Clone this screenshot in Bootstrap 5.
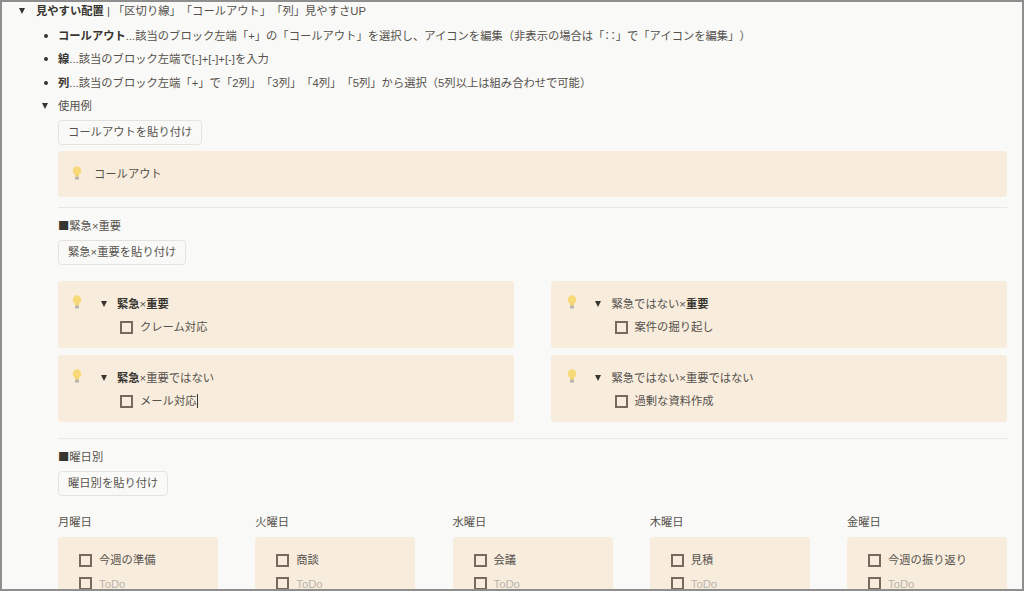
<!DOCTYPE html>
<html lang="ja">
<head>
  <meta charset="UTF-8">
  <title>見やすい配置</title>
  <link href="https://cdn.jsdelivr.net/npm/bootstrap@5.3.2/dist/css/bootstrap.min.css" rel="stylesheet">
  <style>
    html, body { height: 100%; overflow: hidden; }
    body {
      background: #f9f9f7;
      color: #55514c;
      font-family: "Liberation Sans", "Noto Sans CJK JP", sans-serif;
      font-size: 11.3px;
      line-height: 16px;
      text-spacing-trim: space-all;
    }
    b { color: #37352f; font-weight: 700; }
    .page-frame {
      height: 591px;
      overflow: hidden;
      border: 2px solid #8e8e8e;
      padding: 0 15px 0 16px;
    }
    .line-row { height: 23.5px; display: flex; align-items: center; }
    .first-row { height: 21.75px; padding-bottom: 3.5px; }
    .tri { width: 0; height: 0; flex: none; border-left: 3.5px solid transparent; border-right: 3.5px solid transparent; border-top: 6.5px solid #37352f; }
    .top-tri { margin: 0 11px 0 1px; }
    .sub-indent { padding-left: 40px; }
    .dot { width: 4px; height: 4px; border-radius: 50%; background: #37352f; flex: none; margin: 0 10px 0 26px; }
    .sub-tri { margin: 0 10px 0 24px; }
    .paste-btn {
      display: inline-block;
      padding: 0 9px;
      height: 25px;
      line-height: 23px;
      color: #57534e;
      background: #f9f9f7;
      border: 1px solid #e4e3df;
      border-radius: 4px;
    }
    .btn-row { margin-top: 8px; }
    .btn-row-top { margin-top: 2.5px; }
    .call-box { background: #f8ecdd; border-radius: 3px; }
    .call-wide { height: 46px; margin-top: 6px; padding: 0 14px; display: flex; align-items: center; }
    .bulb { width: 10px; height: 14px; flex: none; }
    .call-wide .bulb { margin-right: 12px; margin-top: -3px; }
    .rule-line { height: 1px; background: #e9e8e4; }
    .rule-one { margin: 10px 0 8px; }
    .rule-two { margin-top: 16px; margin-bottom: 8px; }
    .sect-title { height: 16px; padding-top: 1px; }
    .sect-mark { font-family: "Noto Sans CJK JP", sans-serif; color: #37352f; }
    .quad-grid { display: grid; grid-template-columns: 456px 456px; column-gap: 37px; row-gap: 7px; margin-top: 16px; }
    .quad-box { height: 67px; padding: 14px 14px 0; display: flex; }
    .quad-box:nth-child(even) { padding-left: 15.5px; }
    .quad-box .bulb { margin-right: 15px; }
    .quad-body { flex: 1; }
    .quad-head { display: flex; align-items: center; height: 16px; margin-top: 1px; }
    .quad-head .tri { margin-right: 10.5px; margin-left: 3.5px; }
    .check-row { display: flex; align-items: center; height: 16px; }
    .check-box { width: 13px; height: 13px; flex: none; border: 2px solid #766a5e; margin-right: 7px; }
    .quad-box .check-row { margin: 7px 0 0 23px; }
    .caret { display: inline-block; width: 1px; height: 14px; background: #37352f; vertical-align: -3px; }
    .day-grid { display: grid; grid-template-columns: repeat(5, 160px); column-gap: 37.25px; margin-top: 18px; }
    .day-head { height: 16px; margin-bottom: 7px; }
    .day-box { height: 70px; padding: 15px 0 0 21px; }
    .day-box .check-row { margin-bottom: 7.5px; }
    .hint-text { color: #b9b4ab; }
  </style>
</head>
<body>
  <svg width="0" height="0" class="d-block">
    <symbol id="bulb" viewBox="0 0 10 15">
      <circle cx="5" cy="5" r="4.6" fill="#f8d978"/>
      <rect x="3" y="9" width="4" height="2.5" fill="#f3cf6b"/>
      <rect x="3" y="11.5" width="4" height="3" rx=".6" fill="#b4b2ac"/>
    </symbol>
  </svg>
  <div class="page-frame">
    <div class="line-row first-row"><span class="tri top-tri"></span><span><b>見やすい配置</b> | 「区切り線」「コールアウト」「列」見やすさUP</span></div>
    <div class="line-row"><span class="dot"></span><span><b>コールアウト</b>...該当のブロック左端「+」の「コールアウト」を選択し、アイコンを編集（非表示の場合は「∷」で「アイコンを編集」）</span></div>
    <div class="line-row"><span class="dot"></span><span><b>線</b>...該当のブロック左端で[-]+[-]+[-]を入力</span></div>
    <div class="line-row"><span class="dot"></span><span><b>列</b>...該当のブロック左端「+」で「2列」「3列」「4列」「5列」から選択（5列以上は組み合わせで可能）</span></div>
    <div class="line-row"><span class="tri sub-tri"></span><span>使用例</span></div>

    <div class="sub-indent">
      <div class="btn-row-top"><span class="paste-btn">コールアウトを貼り付け</span></div>
      <div class="call-box call-wide">
        <svg class="bulb"><use href="#bulb"/></svg>
        <span>コールアウト</span>
      </div>
      <div class="rule-line rule-one"></div>

      <div class="sect-title"><span class="sect-mark">■</span>緊急×重要</div>
      <div class="btn-row"><span class="paste-btn">緊急×重要を貼り付け</span></div>

      <div class="quad-grid">
        <div class="call-box quad-box">
          <svg class="bulb"><use href="#bulb"/></svg>
          <div class="quad-body">
            <div class="quad-head"><span class="tri"></span><span><b>緊急</b>×<b>重要</b></span></div>
            <div class="check-row"><span class="check-box"></span><span>クレーム対応</span></div>
          </div>
        </div>
        <div class="call-box quad-box">
          <svg class="bulb"><use href="#bulb"/></svg>
          <div class="quad-body">
            <div class="quad-head"><span class="tri"></span><span>緊急ではない×<b>重要</b></span></div>
            <div class="check-row"><span class="check-box"></span><span>案件の掘り起し</span></div>
          </div>
        </div>
        <div class="call-box quad-box">
          <svg class="bulb"><use href="#bulb"/></svg>
          <div class="quad-body">
            <div class="quad-head"><span class="tri"></span><span><b>緊急</b>×重要ではない</span></div>
            <div class="check-row"><span class="check-box"></span><span>メール対応<span class="caret"></span></span></div>
          </div>
        </div>
        <div class="call-box quad-box">
          <svg class="bulb"><use href="#bulb"/></svg>
          <div class="quad-body">
            <div class="quad-head"><span class="tri"></span><span>緊急ではない×重要ではない</span></div>
            <div class="check-row"><span class="check-box"></span><span>過剰な資料作成</span></div>
          </div>
        </div>
      </div>

      <div class="rule-line rule-two"></div>
      <div class="sect-title"><span class="sect-mark">■</span>曜日別</div>
      <div class="btn-row"><span class="paste-btn">曜日別を貼り付け</span></div>

      <div class="day-grid">
        <div>
          <div class="day-head">月曜日</div>
          <div class="call-box day-box">
            <div class="check-row"><span class="check-box"></span><span>今週の準備</span></div>
            <div class="check-row"><span class="check-box"></span><span class="hint-text">ToDo</span></div>
          </div>
        </div>
        <div>
          <div class="day-head">火曜日</div>
          <div class="call-box day-box">
            <div class="check-row"><span class="check-box"></span><span>商談</span></div>
            <div class="check-row"><span class="check-box"></span><span class="hint-text">ToDo</span></div>
          </div>
        </div>
        <div>
          <div class="day-head">水曜日</div>
          <div class="call-box day-box">
            <div class="check-row"><span class="check-box"></span><span>会議</span></div>
            <div class="check-row"><span class="check-box"></span><span class="hint-text">ToDo</span></div>
          </div>
        </div>
        <div>
          <div class="day-head">木曜日</div>
          <div class="call-box day-box">
            <div class="check-row"><span class="check-box"></span><span>見積</span></div>
            <div class="check-row"><span class="check-box"></span><span class="hint-text">ToDo</span></div>
          </div>
        </div>
        <div>
          <div class="day-head">金曜日</div>
          <div class="call-box day-box">
            <div class="check-row"><span class="check-box"></span><span>今週の振り返り</span></div>
            <div class="check-row"><span class="check-box"></span><span class="hint-text">ToDo</span></div>
          </div>
        </div>
      </div>
    </div>
  </div>
  <script src="https://cdn.jsdelivr.net/npm/bootstrap@5.3.2/dist/js/bootstrap.bundle.min.js"></script>
</body>
</html>
